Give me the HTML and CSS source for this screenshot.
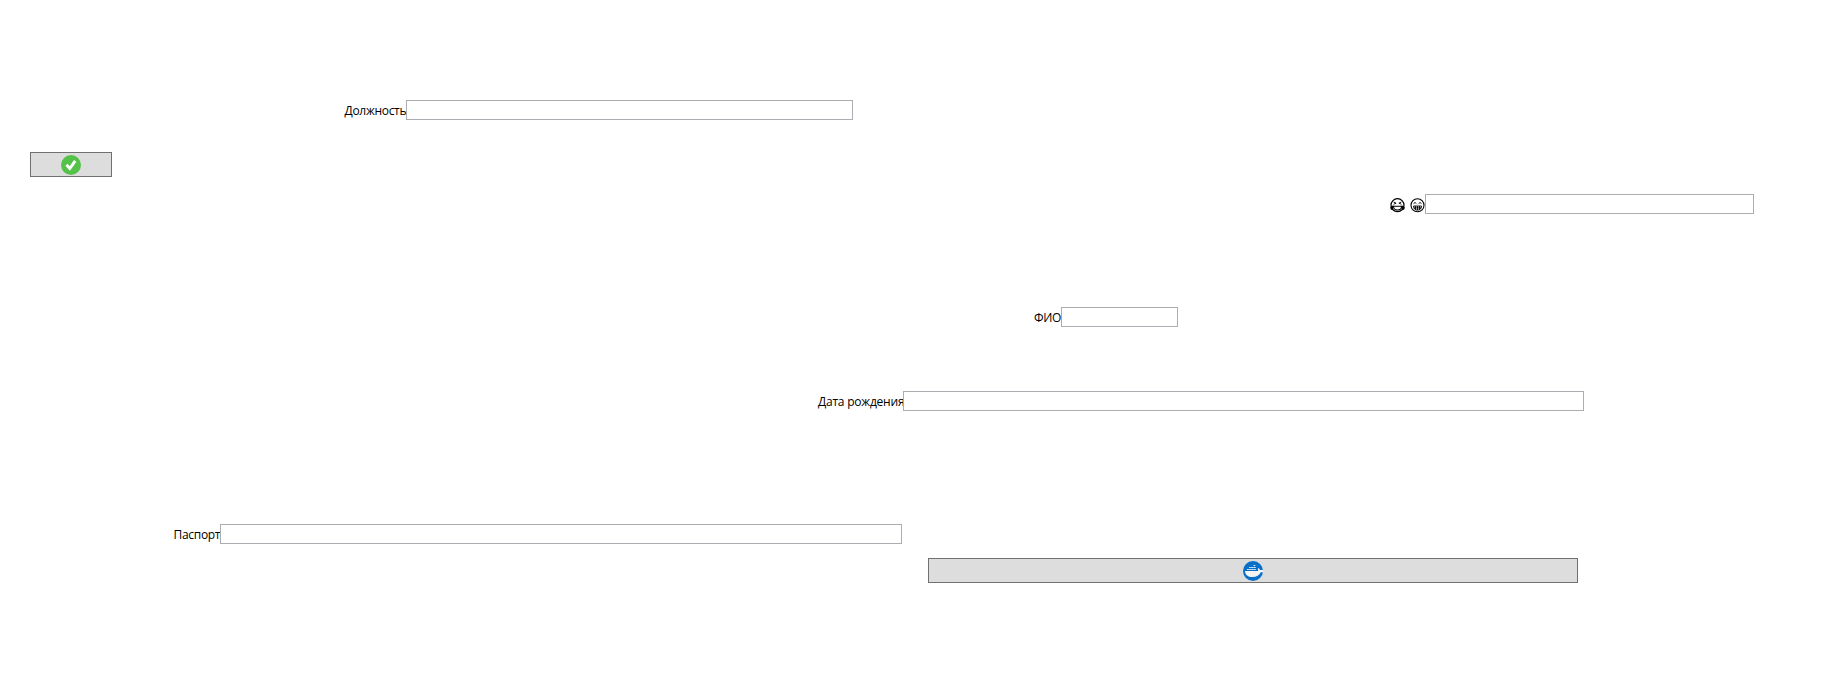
FILE: index.html
```html
<!DOCTYPE html>
<html lang="ru">
<head>
<meta charset="utf-8">
<title>Форма</title>
<link rel="stylesheet" href="styles.css">
</head>
<body>
<form class="form">
  <div class="row position"><label class="label" for="position">Должность</label><input class="field" id="position"></div>
  <button class="button confirm" type="button" aria-label="OK">
    <svg width="20" height="20" viewBox="0 0 20 20"><circle cx="10" cy="10" r="10" fill="#54c248"/><path d="M5.500 9.800 8.800 13.500 14.200 5.800" fill="none" stroke="#fff" stroke-width="2.900"/></svg>
  </button>
  <div class="row mood">
    <label class="label faces" for="mood">
      <svg width="15" height="15" viewBox="0 0 15 15" fill="none" stroke="#000"><circle cx="7.500" cy="7.200" r="6.500" stroke-width="1.200"/><path d="M3.600 4l2.500 1.200-2.500 1M11.400 4 8.900 5.200l2.500 1" stroke-width=".9"/><path d="M3.500 8.200h8c0 5-8 5-8 0Z" stroke-width="1.100"/><path d="M.300 9.500c0-1 1.500-2 3-2 .5 2 .3 4.500-1.300 4.500C1 12 .300 11 .300 9.500ZM14.700 9.500c0-1-1.500-2-3-2-.5 2-.3 4.500 1.300 4.500 1.200 0 1.700-1 1.700-2.500Z" fill="#000" stroke="none"/></svg>
      <svg width="15" height="15" viewBox="0 0 15 15" fill="none" stroke="#000"><circle cx="7.500" cy="7.200" r="6.500" stroke-width="1.100"/><path d="M3.500 5.600 5 4.500l1.400 1.100M8.600 5.600 10 4.500l1.500 1.100" stroke-width=".9"/><path d="M3.500 8h8c0 5.500-8 5.500-8 0ZM3.700 9.900h7.600M5.500 8v3.500M7.500 8v4M9.500 8v3.500" stroke-width=".9"/></svg>
    </label><input class="field" id="mood">
  </div>
  <div class="row name"><label class="label" for="name">ФИО</label><input class="field" id="name"></div>
  <div class="row birth"><label class="label" for="birth">Дата рождения</label><input class="field" id="birth"></div>
  <div class="row passport"><label class="label" for="passport">Паспорт</label><input class="field" id="passport"></div>
  <button class="button ship" type="button" aria-label="Docker">
    <svg width="20" height="20" viewBox="0 0 20 20"><circle cx="10" cy="10" r="10" fill="#096fc8"/><path d="M2 10h13.200c-.6-1.200-.3-2.300.4-3 .8.500 1.100 1.100 1.200 2H20v2.300h-2.300C16.500 14.300 13.500 16 9.500 16 5 16 2.300 14 2 10Z" fill="#f4f4f4"/><path d="M4 8.500h9M6 6.500h7M10.500 4.500h2" stroke="#d9ebfa" stroke-width="1.200" stroke-dasharray="1.800 .3"/></svg>
  </button>
</form>
</body>
</html>
```
FILE: styles.css
```css
* { box-sizing: border-box; }
body { margin: 0; background: #fff; }
.form {
  display: flex;
  flex-direction: column;
  align-items: flex-start;
  width: 1835px;
  height: 695px;
  padding-top: 100px;
  font: 12px/16px "Open Sans", "Noto Sans", sans-serif;
  color: #000;
}
.row { display: flex; height: 20px; }
.label { padding-top: 3px; white-space: nowrap; }
.field {
  height: 20px;
  margin: 0;
  padding: 0 3px;
  border: 1px solid #abadb3;
  border-radius: 0;
  background: #fff;
  outline: none;
}
.button {
  display: flex;
  align-items: center;
  justify-content: center;
  height: 25px;
  padding: 0;
  border: 1px solid #707070;
  border-radius: 0;
  background: #ddd;
}
.position { margin-left: 344.5px; }
.position .label { width: 61.5px; letter-spacing: -.3px; }
.position .field { width: 447px; }
.confirm { width: 82px; margin: 32px 0 0 30px; }
.mood { margin: 17px 0 0 1390px; }
.mood .faces { display: flex; gap: 5px; width: 35px; padding-top: 4px; }
.mood .field { width: 329px; }
.name { margin: 93px 0 0 1034px; }
.name .label { width: 27px; letter-spacing: -.4px; }
.name .field { width: 117px; }
.birth { margin: 64px 0 0 818px; }
.birth .label { width: 85px; letter-spacing: -.22px; }
.birth .field { width: 681px; }
.passport { margin: 113px 0 0 173.5px; }
.passport .label { width: 46.5px; letter-spacing: -.3px; }
.passport .field { width: 682px; }
.ship { width: 650px; margin: 14px 0 0 928px; }
```
